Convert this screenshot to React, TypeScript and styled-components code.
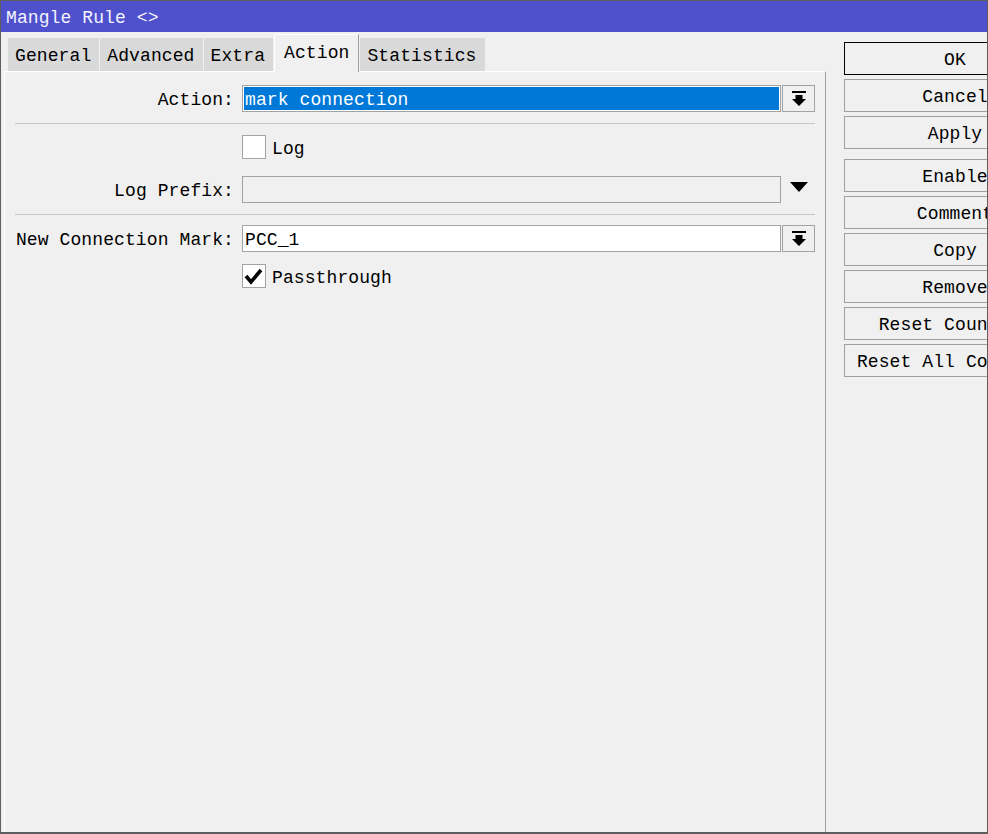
import React from "react";
import styled, { createGlobalStyle, css } from "styled-components";

const Global = createGlobalStyle`
  html, body { margin: 0; padding: 0; background: #f0f0f0; }
  body {
    font-family: "Liberation Mono", "DejaVu Sans Mono", monospace;
    font-size: 18px;
    letter-spacing: 0.1px;
    color: #000;
  }
  * { box-sizing: border-box; }
`;

const Window = styled.div`
  width: 988px;
  height: 834px;
  border: 1px solid #5e5e5e;
  border-bottom-width: 2px;
  background: #f0f0f0;
  display: flex;
  flex-direction: column;
  overflow: hidden;
`;

const TitleBar = styled.div`
  height: 31px;
  flex: none;
  background: #4f50cc;
  color: #f4f4ff;
  padding: 3px 0 0 5px;
  display: flex;
  align-items: center;
  white-space: pre;
`;

const Body = styled.div`
  flex: 1;
  display: flex;
  min-height: 0;
`;

const LeftPane = styled.div`
  width: 825px;
  flex: none;
  display: flex;
  flex-direction: column;
`;

const TabStrip = styled.div`
  height: 39px;
  flex: none;
  display: flex;
  align-items: flex-end;
  padding-left: 7px;
  position: relative;
  z-index: 1;
`;

const Tab = styled.div<{ $active?: boolean }>`
  height: 33px;
  padding: 3px 8px 0 7px;
  margin-right: 1px;
  background: #d9d9d9;
  display: flex;
  align-items: center;
  white-space: pre;
  ${(p) =>
    p.$active &&
    css`
      height: 38px;
      margin-bottom: -1px;
      padding: 0 9px 1px;
      background: #f0f0f0;
      border-top: 1px solid #ffffff;
      border-left: 1px solid #ffffff;
      border-right: 1px solid #a0a0a0;
    `}
`;

const Panel = styled.div`
  flex: 1;
  margin-left: 3px;
  border-top: 1px solid #ffffff;
  border-left: 1px solid #ffffff;
  border-right: 1px solid #a0a0a0;
  padding: 13px 10px 0 10px;
  display: flex;
  flex-direction: column;
`;

const Row = styled.div<{ $top: number }>`
  display: flex;
  align-items: center;
  margin-top: ${(p) => p.$top}px;
`;

const Label = styled.div`
  width: 219px;
  margin-right: 8px;
  padding-top: 2px;
  text-align: right;
  white-space: pre;
`;

const Spacer = styled.div`
  width: 227px;
  flex: none;
`;

const Field = styled.div<{ $variant?: "selected" | "disabled" | "normal" }>`
  flex: 1;
  height: 27px;
  border: 1px solid #a3a3a3;
  background: ${(p) => (p.$variant === "disabled" ? "#f0f0f0" : "#ffffff")};
  padding: 1px;
  display: flex;
`;

const FieldValue = styled.div<{ $selected?: boolean }>`
  flex: 1;
  display: flex;
  align-items: center;
  padding: 2px 0 0 1px;
  white-space: pre;
  background: ${(p) => (p.$selected ? "#0078d7" : "transparent")};
  color: ${(p) => (p.$selected ? "#ffffff" : "#000000")};
`;

const DropButton = styled.div`
  width: 33px;
  height: 27px;
  margin-left: 1px;
  border: 1px solid #a3a3a3;
  background: #f0f0f0;
  display: flex;
  align-items: center;
  justify-content: center;
`;

const ArrowCell = styled.div`
  width: 33px;
  margin-left: 1px;
  display: flex;
  justify-content: center;
  align-self: flex-start;
  padding-top: 6px;
`;

const Separator = styled.div<{ $top: number }>`
  height: 1px;
  background: #c6c6c6;
  margin-top: ${(p) => p.$top}px;
`;

const CheckBox = styled.div`
  width: 24px;
  height: 24px;
  border: 1px solid #a3a3a3;
  background: #ffffff;
  margin-right: 6px;
  display: flex;
  align-items: center;
  justify-content: center;
`;

const CheckText = styled.div`
  white-space: pre;
  padding-top: 3px;
`;

const ButtonColumn = styled.div`
  margin-left: 18px;
  padding-top: 10px;
  display: flex;
  flex-direction: column;
  gap: 4px;
`;

const Button = styled.div<{ $default?: boolean; $groupStart?: boolean }>`
  width: 222px;
  height: 33px;
  flex: none;
  border: 1px solid ${(p) => (p.$default ? "#000000" : "#a0a0a0")};
  background: #f0f0f0;
  padding-top: 2px;
  display: flex;
  align-items: center;
  justify-content: center;
  white-space: pre;
  margin-top: ${(p) => (p.$groupStart ? 6 : 0)}px;
`;

const DropIcon = () => (
  <svg width="16" height="16" viewBox="0 0 16 16">
    <rect x="1" y="0" width="14" height="2" fill="#000" />
    <polygon points="4.5,4 11.5,4 11.5,8 15,8 8,15 1,8 4.5,8" fill="#000" />
  </svg>
);

const TriangleIcon = () => (
  <svg width="18" height="10" viewBox="0 0 18 10">
    <polygon points="0,0 18,0 9,10" fill="#000" />
  </svg>
);

const CheckIcon = () => (
  <svg width="22" height="22" viewBox="0 0 22 22">
    <polyline
      points="3,11 8,17 18,5"
      fill="none"
      stroke="#000"
      strokeWidth="3.6"
      strokeLinejoin="miter"
      strokeLinecap="butt"
    />
  </svg>
);

const tabs = ["General", "Advanced", "Extra", "Action", "Statistics"];
const buttons = [
  "OK",
  "Cancel",
  "Apply",
  "Enable",
  "Comment",
  "Copy",
  "Remove",
  "Reset Counters",
  "Reset All Counters",
];

export default function App() {
  return (
    <>
      <Global />
      <Window>
        <TitleBar>Mangle Rule &lt;&gt;</TitleBar>
        <Body>
          <LeftPane>
            <TabStrip>
              {tabs.map((t) => (
                <Tab key={t} $active={t === "Action"}>
                  {t}
                </Tab>
              ))}
            </TabStrip>
            <Panel>
              <Row $top={0}>
                <Label>Action:</Label>
                <Field $variant="selected">
                  <FieldValue $selected>mark connection</FieldValue>
                </Field>
                <DropButton>
                  <DropIcon />
                </DropButton>
              </Row>
              <Separator $top={11} />
              <Row $top={11}>
                <Spacer />
                <CheckBox />
                <CheckText>Log</CheckText>
              </Row>
              <Row $top={17}>
                <Label>Log Prefix:</Label>
                <Field $variant="disabled">
                  <FieldValue />
                </Field>
                <ArrowCell>
                  <TriangleIcon />
                </ArrowCell>
              </Row>
              <Separator $top={11} />
              <Row $top={10}>
                <Label>New Connection Mark:</Label>
                <Field>
                  <FieldValue>PCC_1</FieldValue>
                </Field>
                <DropButton>
                  <DropIcon />
                </DropButton>
              </Row>
              <Row $top={12}>
                <Spacer />
                <CheckBox>
                  <CheckIcon />
                </CheckBox>
                <CheckText>Passthrough</CheckText>
              </Row>
            </Panel>
          </LeftPane>
          <ButtonColumn>
            {buttons.map((b) => (
              <Button key={b} $default={b === "OK"} $groupStart={b === "Enable"}>
                {b}
              </Button>
            ))}
          </ButtonColumn>
        </Body>
      </Window>
    </>
  );
}
